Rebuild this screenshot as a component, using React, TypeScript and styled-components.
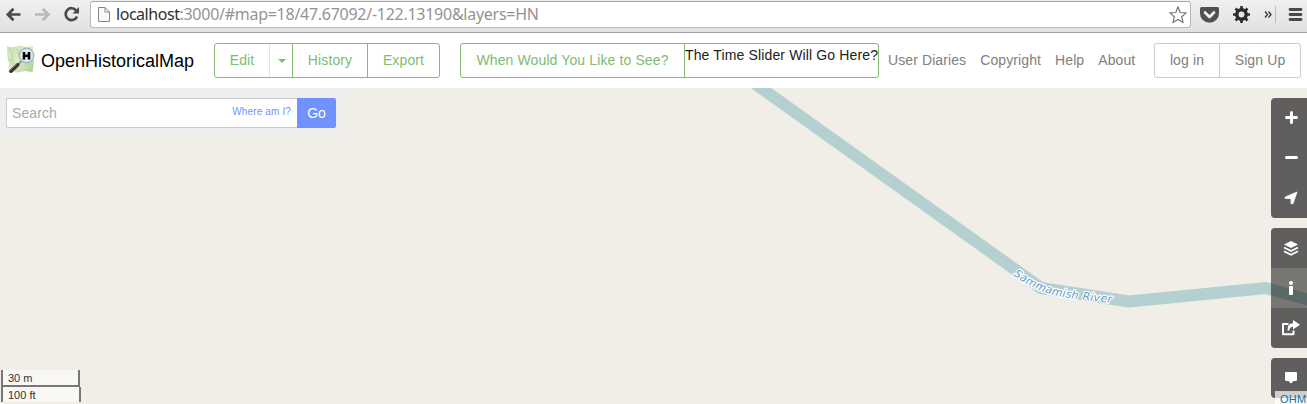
import React from "react";
import styled, { createGlobalStyle } from "styled-components";

const Global = createGlobalStyle`
  * { box-sizing: border-box; }
  body { margin: 0; overflow: hidden; font-family: "Liberation Sans", Arial, sans-serif; }
`;

const Page = styled.div`
  display: flex;
  flex-direction: column;
  width: 100vw;
  height: 100vh;
  overflow: hidden;
  background: #fff;
`;

const BrowserBar = styled.div`
  display: flex;
  align-items: flex-start;
  height: 33px;
  flex: none;
  background: linear-gradient(#f0f0f0, #e1e1e1);
  border-bottom: 1px solid #a3a3a3;
`;

const NavIcons = styled.div`
  width: 90px;
  flex: none;
  height: 30px;
`;

const AddressBox = styled.div`
  display: flex;
  align-items: center;
  width: 1101px;
  height: 27px;
  margin-top: 1px;
  padding: 0 2px 0 7px;
  background: #fff;
  border: 1px solid #b9b9b9;
  border-top-color: #a5a5a5;
  border-radius: 3px;
`;

const Url = styled.div`
  flex: 1;
  padding-left: 6px;
  margin-top: -2px;
  font: 16px/24px "Noto Sans", sans-serif;
  letter-spacing: -0.27px;
  white-space: nowrap;
  color: #939393;
`;

const Host = styled.span`
  letter-spacing: -0.46px;
  color: #303030;
`;

const BrowserTools = styled.div`
  flex: 1;
  height: 30px;
`;

const Header = styled.header`
  display: flex;
  align-items: flex-start;
  height: 55px;
  flex: none;
  padding: 10px 6px 0 6px;
  background: #fff;
`;

const Brand = styled.div`
  display: flex;
  align-items: flex-start;
  width: 208px;
  height: 35px;
  padding-top: 2px;
  font-size: 18px;
  line-height: 33px;
  color: #000;
  white-space: nowrap;
`;

const BrandName = styled.span`
  margin-left: 5px;
`;

const Group = styled.div<{ $tone: string; $width: number; $gap?: number }>`
  display: flex;
  flex: none;
  width: ${(p) => p.$width}px;
  height: 35px;
  margin-right: ${(p) => p.$gap ?? 0}px;
  border: 1px solid ${(p) => p.$tone};
  border-radius: 3px;
  color: ${(p) => p.$tone};
`;

const Cell = styled.div<{ $width: number; $line?: string; $text?: string }>`
  display: flex;
  justify-content: center;
  align-items: center;
  flex: none;
  width: ${(p) => p.$width}px;
  border-left: ${(p) => (p.$line ? `1px solid ${p.$line}` : "0")};
  font-size: 14px;
  line-height: 33px;
  letter-spacing: 0.12px;
  white-space: nowrap;
  color: ${(p) => p.$text ?? "inherit"};
`;

const SliderCell = styled(Cell)`
  align-items: flex-start;
  justify-content: flex-start;
  line-height: 22px;
  letter-spacing: 0.14px;
`;

const Caret = styled.span`
  border: 4px solid transparent;
  border-top-color: #7ebc6f;
  border-bottom: 0;
  margin: 1px 0 0 1px;
`;

const Links = styled.nav`
  display: flex;
  flex: 1;
  gap: 14px;
  padding-left: 9px;
  font-size: 14px;
  line-height: 35px;
  letter-spacing: 0.1px;
  color: #808080;
  white-space: nowrap;
`;

const MapArea = styled.main`
  position: relative;
  display: flex;
  flex: 1;
  min-height: 0;
  justify-content: space-between;
  background: #f1eee8;
  overflow: hidden;
`;

const MapCanvas = styled.svg`
  position: absolute;
  inset: 0;
`;

const LeftColumn = styled.div`
  display: flex;
  flex-direction: column;
  justify-content: space-between;
  position: relative;
  padding-bottom: 2px;
`;

const SearchPanel = styled.div`
  display: flex;
  width: 346px;
  height: 49px;
  padding: 10px 10px 9px 6px;
  background: #eee;
`;

const SearchField = styled.div`
  display: flex;
  justify-content: space-between;
  width: 291px;
  height: 30px;
  padding: 0 6px 0 5px;
  border: 1px solid #ccc;
  border-right: 0;
  border-radius: 2px 0 0 2px;
  background: #fff;
  font-size: 14px;
  line-height: 28px;
  letter-spacing: 0.1px;
  color: #a9a9a9;
`;

const WhereLink = styled.span`
  font-size: 10px;
  line-height: 25px;
  letter-spacing: 0.14px;
  color: #7092ff;
`;

const GoButton = styled.div`
  width: 39px;
  height: 30px;
  border-radius: 0 2px 2px 0;
  background: #7092ff;
  color: #fff;
  font-size: 14px;
  line-height: 30px;
  text-align: center;
`;

const Scale = styled.div`
  display: flex;
  flex-direction: column;
  align-items: flex-start;
  padding-left: 1px;
`;

const ScaleLine = styled.div<{ $width: number; $ruled?: boolean }>`
  width: ${(p) => p.$width}px;
  height: ${(p) => (p.$ruled ? 17 : 15)}px;
  padding-left: 5px;
  border: 2px solid #777;
  border-top: 0;
  border-bottom-width: ${(p) => (p.$ruled ? 2 : 0)}px;
  background: rgba(255, 255, 255, 0.5);
  font-size: 11px;
  line-height: 17px;
  color: #333;
`;

const Controls = styled.div`
  position: relative;
  display: flex;
  flex-direction: column;
  gap: 10px;
  width: 36px;
  padding-top: 10px;
`;

const ControlGroup = styled.div`
  flex: none;
  border-radius: 4px 0 0 4px;
  overflow: hidden;
`;

const Control = styled.div<{ $hover?: boolean }>`
  display: flex;
  align-items: center;
  justify-content: center;
  height: 40px;
  padding-left: 4px;
  background: ${(p) => (p.$hover ? "rgba(0,0,0,.5)" : "rgba(0,0,0,.6)")};
`;

const Attribution = styled.div`
  position: absolute;
  right: 0;
  bottom: 0;
  width: 32px;
  height: 13px;
  padding-left: 5px;
  overflow: hidden;
  background: rgba(255, 255, 255, 0.7);
  font-size: 11px;
  line-height: 17px;
  letter-spacing: 0.3px;
  color: #0078a8;
  white-space: nowrap;
`;

const GREEN = "#7ebc6f";

const Icon = ({ children }: { children: React.ReactNode }) => (
  <svg width="20" height="20" viewBox="0 0 20 20" fill="#fff">
    {children}
  </svg>
);

const Logo = () => (
  <svg width="30" height="30" viewBox="0 0 30 30">
    <defs>
      <linearGradient id="land" x1="0" y1="0" x2="1" y2="1">
        <stop offset="0" stopColor="#c5e3ac" />
        <stop offset=".5" stopColor="#dcedca" />
        <stop offset="1" stopColor="#a7cf90" />
      </linearGradient>
      <radialGradient id="glass">
        <stop offset="0" stopColor="#f4fafc" />
        <stop offset=".75" stopColor="#d9e8ee" />
        <stop offset="1" stopColor="#b4c9d0" />
      </radialGradient>
    </defs>
    <path d="M1 1.500Q6 3 10 1.500T19 2L27 1V11L28 18L26.500 27L19 26L12 27.500L6 26L2 27L3 19L1.500 12Z" fill="url(#land)" />
    <path d="M3 3Q8 9 6 14T11 25M12 4Q10 8 15 12M19 21L24 19L26 22M2 15Q7 12 9 19" fill="none" stroke="#aed39a" strokeWidth=".8" />
    <path d="M4 8L9 5M15 18L19 25M3 21L9 17" fill="none" stroke="#eed2bd" strokeWidth=".8" />
    <path d="M15.500 16L11 20.500" stroke="#89958d" strokeWidth="2" />
    <path d="M11.700 19.800L5 26.200" stroke="#333" strokeWidth="3.600" strokeLinecap="round" />
    <path d="M10.600 19.500L5 24.500" stroke="#777" strokeWidth="1" />
    <circle cx="20.500" cy="10.500" r="7.500" fill="url(#glass)" stroke="#9aadb4" strokeWidth="1" />
    <path d="M18 7V14.500M23 7V14.500M18 10.700H23" stroke="#050505" strokeWidth="2.600" />
  </svg>
);

export default function App() {
  return (
    <Page>
      <Global />
      <BrowserBar>
        <NavIcons>
          <svg width="90" height="30" viewBox="0 0 90 30" fill="none">
            <path d="M20.500 14.500H8M13.500 8.800L7.800 14.500L13.500 20.200" stroke="#4b4b4b" strokeWidth="2.700" />
            <path d="M35 14.500H48M42.700 8.800L48.400 14.500L42.700 20.200" stroke="#b9b9b9" strokeWidth="2.700" />
            <path d="M76.300 10.600A5.900 5.900 0 1 0 77 16.400" stroke="#4b4b4b" strokeWidth="2.700" />
            <path d="M79 7V13.500H72.500Z" fill="#4b4b4b" />
          </svg>
        </NavIcons>
        <AddressBox>
          <svg width="12" height="16" viewBox="0 0 12 16" fill="#f8f8f8" stroke="#858585">
            <path d="M.5 .5H7L11.500 5V14.500H.5ZM7 .5V5H11.500" />
          </svg>
          <Url>
            <Host>localhost</Host>:3000/#map=18/47.67092/-122.13190&amp;layers=HN
          </Url>
          <svg width="20" height="20" viewBox="0 0 20 20" fill="#fff" stroke="#777" strokeLinejoin="round" strokeWidth="1.200">
            <path d="M10 1.800L12.200 7.500L18.200 7.900L13.600 11.700L15.100 17.600L10 14.400L4.900 17.600L6.400 11.700L1.800 7.900L7.800 7.500Z" />
          </svg>
        </AddressBox>
        <BrowserTools>
          <svg width="116" height="30" viewBox="1191 0 116 30">
            <path d="M1201.500 7H1217.500Q1219 7 1219 8.500V13.500A9.500 9.300 0 0 1 1200 13.500V8.500Q1200 7 1201.500 7Z" fill="#515151" />
            <path d="M1205 12.500L1209.500 17L1214 12.500" fill="none" stroke="#f2f2f2" strokeWidth="2.700" strokeLinecap="round" strokeLinejoin="round" />
            <g stroke="#2c2c2c">
              <circle cx="1241.500" cy="14.500" r="4.700" fill="none" strokeWidth="3.500" />
              <path d="M1241.500 6V9M1241.500 20V23M1233 14.500H1236M1247 14.500H1250M1235.500 8.500L1237.500 10.500M1245.500 18.500L1247.500 20.500M1235.500 20.500L1237.500 18.500M1245.500 10.500L1247.500 8.500" strokeWidth="2.600" />
            </g>
            <path d="M1265 11.500L1267.500 14.500L1265 17.500M1268.500 11.500L1271 14.500L1268.500 17.500" fill="none" stroke="#333" strokeWidth="1.300" />
            <path d="M1275.500 6V23" stroke="#bdbdbd" />
            <path d="M1290 9.500H1301M1290 14.500H1301M1290 19.500H1301" stroke="#4b4b4b" strokeWidth="2.800" strokeLinecap="round" />
          </svg>
        </BrowserTools>
      </BrowserBar>

      <Header>
        <Brand>
          <Logo />
          <BrandName>OpenHistoricalMap</BrandName>
        </Brand>
        <Group $tone={GREEN} $width={226} $gap={20}>
          <Cell $width={54}>Edit</Cell>
          <Cell $width={23} $line="#d8ebd4"><Caret /></Cell>
          <Cell $width={75} $line={GREEN}>History</Cell>
          <Cell $width={72} $line={GREEN}>Export</Cell>
        </Group>
        <Group $tone={GREEN} $width={419}>
          <Cell $width={223}>When Would You Like to See?</Cell>
          <SliderCell $width={194} $line={GREEN} $text="#222">The Time Slider Will Go Here?</SliderCell>
        </Group>
        <Links>
          <span>User Diaries</span>
          <span>Copyright</span>
          <span>Help</span>
          <span>About</span>
        </Links>
        <Group $tone="#ccc" $width={147}>
          <Cell $width={64} $text="#808080">log in</Cell>
          <Cell $width={81} $line="#ccc" $text="#808080">Sign Up</Cell>
        </Group>
      </Header>

      <MapArea>
        <MapCanvas width="1307" height="316" viewBox="0 88 1307 316">
          <path d="M733 68L1041 288L1129 301.500L1266 288L1320 303" fill="none" stroke="#b5d0d0" strokeWidth="12" strokeLinejoin="round" />
          <path id="riverLabel" d="M1013 275Q1033 290 1054 295T1125 304" fill="none" />
          <text fontFamily="'DejaVu Sans', sans-serif" fontStyle="italic" fontSize="11" fill="#6699cc" stroke="#fff" strokeWidth="2.500" strokeLinejoin="round" paintOrder="stroke">
            <textPath href="#riverLabel" textLength="104.500">Sammamish River</textPath>
          </text>
        </MapCanvas>
        <LeftColumn>
          <SearchPanel>
            <SearchField>
              <span>Search</span>
              <WhereLink>Where am I?</WhereLink>
            </SearchField>
            <GoButton>Go</GoButton>
          </SearchPanel>
          <Scale>
            <ScaleLine $width={79} $ruled>30 m</ScaleLine>
            <ScaleLine $width={80}>100 ft</ScaleLine>
          </Scale>
        </LeftColumn>
        <Controls>
          <ControlGroup>
            <Control>
              <Icon><path d="M10.500 4.500V14.500M5.500 9.500H15.500" stroke="#fff" strokeWidth="3" strokeLinecap="round" /></Icon>
            </Control>
            <Control>
              <Icon><path d="M5.500 9.500H15.500" stroke="#fff" strokeWidth="3" strokeLinecap="round" /></Icon>
            </Control>
            <Control>
              <Icon><path d="M16 4L12 15.700H10V10.500H4.200V9Z" stroke="#fff" strokeWidth=".8" strokeLinejoin="round" /></Icon>
            </Control>
          </ControlGroup>
          <ControlGroup>
            <Control>
              <Icon>
                <path d="M10 3L17 6.500L10 10L3 6.500Z" />
                <path d="M3 9.500L10 13L17 9.500M3 13.200L10 16.700L17 13.200" fill="none" stroke="#fff" strokeWidth="1.800" />
              </Icon>
            </Control>
            <Control $hover>
              <Icon>
                <circle cx="10" cy="5" r="2" />
                <rect x="8" y="8" width="4" height="9" rx=".7" />
              </Icon>
            </Control>
            <Control>
              <Icon>
                <path d="M7.500 6H2V16.200H12.500V12.500" fill="none" stroke="#fff" strokeWidth="2" strokeLinejoin="round" />
                <path d="M6.500 12.500Q6 5.500 12 5.200V2L19 6.800L12 11.500V8.800Q8.800 8.600 8.300 12.500Z" />
              </Icon>
            </Control>
          </ControlGroup>
          <ControlGroup>
            <Control>
              <Icon><path d="M5 4H15Q16 4 16 5V11.500Q16 13 14.500 13H12.500L10 15.500L7.500 13H5.500Q4 13 4 11.500V5Q4 4 5 4Z" /></Icon>
            </Control>
          </ControlGroup>
        </Controls>
        <Attribution>OHM</Attribution>
      </MapArea>
    </Page>
  );
}
